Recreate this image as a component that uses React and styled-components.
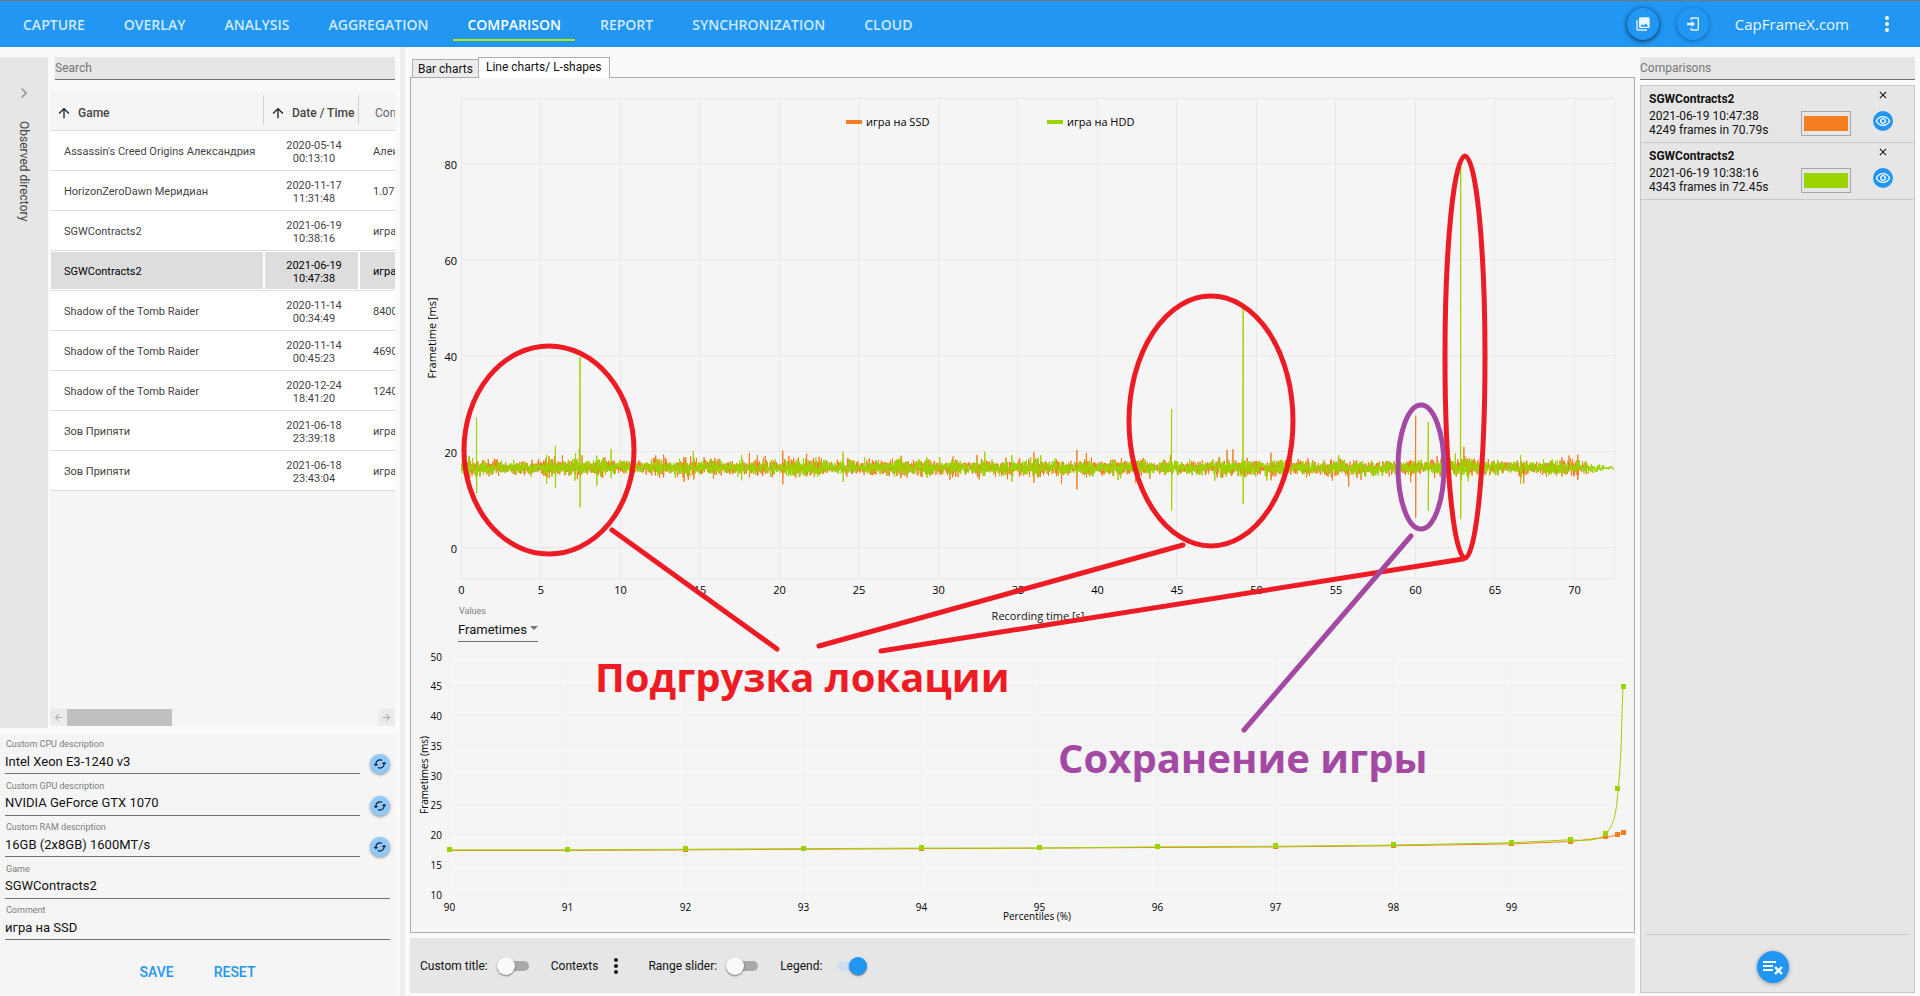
import React, { useState } from 'react';
import styled, { createGlobalStyle } from 'styled-components';
import {
  MdCached,
  MdPhotoLibrary,
  MdMoreVert,
  MdArrowUpward,
  MdArrowBack,
  MdArrowForward,
  MdChevronRight,
  MdClose,
  MdOutlineRemoveRedEye,
} from 'react-icons/md';

const ORANGE = '#f47e20';
const GREEN = '#9bd300';
const RED = '#ed1c24';
const PURPLE = '#a349a4';

const tabs = ['CAPTURE', 'OVERLAY', 'ANALYSIS', 'AGGREGATION', 'COMPARISON', 'REPORT', 'SYNCHRONIZATION', 'CLOUD'];

const records = [
  { game: "Assassin's Creed Origins Александрия", date: '2020-05-14', time: '00:13:10', comment: 'Александрия' },
  { game: 'HorizonZeroDawn Меридиан', date: '2020-11-17', time: '11:31:48', comment: '1.07 Меридиан' },
  { game: 'SGWContracts2', date: '2021-06-19', time: '10:38:16', comment: 'игра на HDD' },
  { game: 'SGWContracts2', date: '2021-06-19', time: '10:47:38', comment: 'игра на SSD' },
  { game: 'Shadow of the Tomb Raider', date: '2020-11-14', time: '00:34:49', comment: '8400' },
  { game: 'Shadow of the Tomb Raider', date: '2020-11-14', time: '00:45:23', comment: '4690' },
  { game: 'Shadow of the Tomb Raider', date: '2020-12-24', time: '18:41:20', comment: '1240' },
  { game: 'Зов Припяти', date: '2021-06-18', time: '23:39:18', comment: 'игра на SSD' },
  { game: 'Зов Припяти', date: '2021-06-18', time: '23:43:04', comment: 'игра на HDD' },
];

const fields = [
  { id: 'cpu', label: 'Custom CPU description', value: 'Intel Xeon E3-1240 v3', refresh: true },
  { id: 'gpu', label: 'Custom GPU description', value: 'NVIDIA GeForce GTX 1070', refresh: true },
  { id: 'ram', label: 'Custom RAM description', value: '16GB (2x8GB) 1600MT/s', refresh: true },
  { id: 'game', label: 'Game', value: 'SGWContracts2' },
  { id: 'comment', label: 'Comment', value: 'игра на SSD' },
];

const comparisons = [
  { id: 1, game: 'SGWContracts2', date: '2021-06-19 10:47:38', frames: '4249 frames in 70.79s', color: ORANGE },
  { id: 2, game: 'SGWContracts2', date: '2021-06-19 10:38:16', frames: '4343 frames in 72.45s', color: GREEN },
];

// [time, peak, dip] of the frames that stand out
const ssdSpikes = [
  [5.5, 19, 14.5], [12.7, 19.4, 14.6], [14.6, 18.8, 14.2], [18.1, 19.8, 14.6], [18.6, 19.3, 15],
  [20.2, 20.2, 13.2], [21.7, 19.6, 14.8], [30.9, 19, 15], [36, 19.9, 13.5], [38.7, 20.4, 12.1],
  [39.3, 19.8, 14.6], [50.9, 19.8, 14], [54.7, 18.4, 14.6], [60, 27.5, 6.2], [69.2, 18.8, 14.8], [70.2, 19.4, 14.1],
];
const hddSpikes = [
  [0.95, 27, 11.3], [5.35, 19.4, 13.3], [5.9, 21.2, 12.4], [7.45, 39.8, 8.4], [8.5, 19.2, 12.9],
  [9.4, 20.5, 14.5], [17.6, 19.3, 14], [24, 20, 13.7], [32.9, 20, 15], [34.6, 19.3, 13.7],
  [44.65, 28.9, 7.7], [49.15, 49.8, 9.1], [60.8, 26.2, 7.7], [62.5, 19.7, 15], [62.83, 79.5, 6], [66.6, 19.3, 13.3],
];

const percentiles = [90, 91, 92, 93, 94, 95, 96, 97, 98, 99, 99.5, 99.8, 99.9, 99.95];
const ssdPercentiles = [17.4, 17.4, 17.5, 17.6, 17.7, 17.8, 17.9, 18, 18.2, 18.5, 18.9, 19.6, 20, 20.4];
const hddPercentiles = [17.5, 17.5, 17.6, 17.7, 17.8, 17.8, 18, 18.1, 18.3, 18.7, 19.2, 20.2, 27.7, 44.8];

const frameX = (t) => 50.5 + t * 15.9;
const frameY = (ms) => 469.5 - ms * 4.79;
const shapeX = (p) => 38.5 + (p - 90) * 118;
const shapeY = (ms) => 251.5 - (ms - 10) * 5.95;

function range(from, to, step) {
  const list = [];
  for (let v = from; v <= to; v += step) list.push(v);
  return list;
}

function buildFrames(seed, duration, count, spread, spikes) {
  let s = seed;
  const random = () => {
    s = (s * 16807) % 2147483647;
    return s / 2147483647;
  };
  const queue = [...spikes];
  const points = [];
  for (let i = 0; i < count; i++) {
    const t = (i / count) * duration;
    if (queue.length && t >= queue[0][0]) {
      const [, peak, dip] = queue.shift();
      points.push([t, peak], [t, dip]);
      continue;
    }
    const swell = 0.85 + 0.12 * Math.sin(t * 0.9 + seed) + 0.12 * Math.sin(t * 3.7);
    const tail = t > 70 ? 1 - (t - 70) * 0.3 : 1;
    const noise = (random() + random() + random() - 1.5) * spread * swell * tail;
    const burst = random() > 0.98 ? 1.9 : 1;
    points.push([t, 16.65 + noise * burst]);
  }
  return points.map(([t, ms]) => `${frameX(t).toFixed(1)},${frameY(ms).toFixed(1)}`).join(' ');
}

const ssdLine = buildFrames(4249, 70.79, 4249, 1.9, ssdSpikes);
const hddLine = buildFrames(4343, 72.45, 4343, 1.7, hddSpikes);

function FrametimeChart() {
  return (
    <Chart viewBox="0 0 1223 522" role="img" aria-label="Frametime chart">
      <g stroke="#e8e8e8">
        {range(0, 70, 5).map((t) => (
          <line key={t} x1={Math.round(frameX(t)) - 0.5} x2={Math.round(frameX(t)) - 0.5} y1="20" y2="500" />
        ))}
        {range(0, 80, 20).map((ms) => (
          <line key={ms} x1="50" x2="1203" y1={Math.round(frameY(ms)) - 0.5} y2={Math.round(frameY(ms)) - 0.5} />
        ))}
        <rect x="50.5" y="20.5" width="1153" height="480" fill="none" />
      </g>
      <polyline points={ssdLine} fill="none" stroke={ORANGE} strokeLinejoin="bevel" />
      <polyline points={hddLine} fill="none" stroke={GREEN} strokeLinejoin="bevel" />
      {range(0, 80, 20).map((ms) => (
        <Tick key={ms} x="46" y={frameY(ms) + 5} textAnchor="end">{ms}</Tick>
      ))}
      {range(0, 70, 5).map((t) => (
        <Tick key={t} x={frameX(t)} y="516" textAnchor="middle">{t}</Tick>
      ))}
      <Tick transform="translate(25 260) rotate(-90)" textAnchor="middle">Frametime [ms]</Tick>
      <rect x="435" y="42" width="16" height="4" fill={ORANGE} />
      <Tick x="455" y="48">игра на SSD</Tick>
      <rect x="636" y="42" width="16" height="4" fill={GREEN} />
      <Tick x="656" y="48">игра на HDD</Tick>
    </Chart>
  );
}

function Shape({ values, color, path }) {
  return (
    <g fill={color}>
      <path d={path} fill="none" stroke={color} />
      {values.map((ms, i) => (
        <rect key={percentiles[i]} x={Math.round(shapeX(percentiles[i])) - 3} y={Math.round(shapeY(ms)) - 3} width="5" height="5" />
      ))}
    </g>
  );
}

function linePath(values, to) {
  return values
    .slice(0, to)
    .map((ms, i) => `${i ? 'L' : 'M'}${shapeX(percentiles[i])} ${shapeY(ms)}`)
    .join('');
}

function PercentileChart() {
  const ssdPath = linePath(ssdPercentiles, 14);
  const hddPath = `${linePath(hddPercentiles, 11)}C1172 198 1188 198 1195 191C1201 183 1205 178 1207 146C1211 110 1210 90 1212 44`;
  return (
    <Chart viewBox="0 0 1223 289" role="img" aria-label="Percentile chart">
      <g stroke="#f0f0f0">
        {range(90, 99, 1).map((p) => (
          <line key={p} x1={Math.round(shapeX(p)) - 0.5} x2={Math.round(shapeX(p)) - 0.5} y1="11" y2="253" />
        ))}
        {range(10, 50, 5).map((ms) => (
          <line key={ms} x1="36" x2="1216" y1={Math.round(shapeY(ms)) - 0.5} y2={Math.round(shapeY(ms)) - 0.5} />
        ))}
      </g>
      <Shape values={ssdPercentiles} color={ORANGE} path={ssdPath} />
      <Shape values={hddPercentiles} color={GREEN} path={hddPath} />
      {range(10, 50, 5).map((ms) => (
        <SmallTick key={ms} x="31" y={shapeY(ms) + 4} textAnchor="end">{ms}</SmallTick>
      ))}
      {range(90, 99, 1).map((p) => (
        <SmallTick key={p} x={shapeX(p)} y="268" textAnchor="middle">{p}</SmallTick>
      ))}
      <SmallTick x="626" y="277" textAnchor="middle">Percentiles (%)</SmallTick>
      <SmallTick transform="translate(17 132) rotate(-90)" textAnchor="middle">Frametimes (ms)</SmallTick>
    </Chart>
  );
}

function Annotations() {
  return (
    <Overlay viewBox="0 0 1223 854" preserveAspectRatio="xMidYMin meet">
      <g fill="none" stroke={RED} strokeWidth="5" strokeLinecap="round">
        <ellipse cx="138" cy="372" rx="85" ry="104" />
        <ellipse cx="800" cy="343" rx="82" ry="125" />
        <ellipse cx="1054" cy="279" rx="20" ry="201" />
        <path d="M201 452L366 571M408 568L772 467M470 573L1052 481" />
      </g>
      <g fill="none" stroke={PURPLE} strokeWidth="5" strokeLinecap="round">
        <ellipse cx="1010" cy="389" rx="23" ry="62" />
        <path d="M1000 458L833 652" />
      </g>
      <Note x="184" y="614" fill={RED}>Подгрузка локации</Note>
      <Note x="647" y="695" fill={PURPLE}>Сохранение игры</Note>
    </Overlay>
  );
}

function App() {
  const [selected, setSelected] = useState(3);
  const [options, setOptions] = useState({ title: false, slider: false, legend: true });

  const toggle = (name) => setOptions({ ...options, [name]: !options[name] });

  return (
    <Page>
      <GlobalStyle />
      <Header>
        <Nav>
          {tabs.map((tab) => (
            <NavLink href="#" key={tab} $active={tab === 'COMPARISON'}>{tab}</NavLink>
          ))}
        </Nav>
        <HeaderTools>
          <RoundButton $deep aria-label="Screenshots"><MdPhotoLibrary /></RoundButton>
          <RoundButton aria-label="Login">
            <svg viewBox="0 0 24 24" width="16" height="16" fill="currentColor">
              <path d="M10 17v-3H3v-4h7V7l5 5-5 5M10 2h9a2 2 0 0 1 2 2v16a2 2 0 0 1-2 2h-9a2 2 0 0 1-2-2v-2h2v2h9V4h-9v2H8V4a2 2 0 0 1 2-2z" />
            </svg>
          </RoundButton>
          <SiteLink href="#">CapFrameX.com</SiteLink>
          <IconButton aria-label="Menu"><MdMoreVert size={24} /></IconButton>
        </HeaderTools>
      </Header>

      <Body>
        <Left>
          <Browser>
            <Directory>
              <MdChevronRight size={20} />
              <span>Observed directory</span>
            </Directory>
            <Records>
              <Search placeholder="Search" aria-label="Search" />
              <TableWrap>
                <Table>
                  <colgroup>
                    <col width="214" />
                    <col width="95" />
                    <col width="200" />
                  </colgroup>
                  <thead>
                    <tr>
                      <th><HeadCell><MdArrowUpward size={16} />Game</HeadCell></th>
                      <th><HeadCell><MdArrowUpward size={16} />Date / Time</HeadCell></th>
                      <th><HeadCell $plain>Comment</HeadCell></th>
                    </tr>
                  </thead>
                  <tbody>
                    {records.map((record, index) => (
                      <Row key={record.date + record.time} $selected={index === selected} onClick={() => setSelected(index)}>
                        <td>{record.game}</td>
                        <td>{record.date}<br />{record.time}</td>
                        <td>{record.comment}</td>
                      </Row>
                    ))}
                  </tbody>
                </Table>
                <ScrollBar>
                  <button aria-label="Scroll left"><MdArrowBack size={11} /></button>
                  <Thumb />
                  <button aria-label="Scroll right"><MdArrowForward size={11} /></button>
                </ScrollBar>
              </TableWrap>
            </Records>
          </Browser>
          <Form onSubmit={(e) => e.preventDefault()}>
            <Fields>
              {fields.map((field) => (
                <Field key={field.id}>
                  <div>
                    <label htmlFor={field.id}>{field.label}</label>
                    <input id={field.id} defaultValue={field.value} />
                  </div>
                  {field.refresh && (
                    <Refresh type="button" aria-label={`Reload ${field.id}`}><MdCached size={14} /></Refresh>
                  )}
                </Field>
              ))}
            </Fields>
            <Actions>
              <FlatButton>SAVE</FlatButton>
              <FlatButton type="reset">RESET</FlatButton>
            </Actions>
          </Form>
        </Left>

        <Splitter />

        <Main>
          <TabList role="tablist">
            <Tab role="tab">Bar charts</Tab>
            <Tab role="tab" $active>Line charts/ L-shapes</Tab>
          </TabList>
          <Panel>
            <FrametimeChart />
            <AxisRow>
              <ValueSelect>
                <label htmlFor="values">Values</label>
                <select id="values" defaultValue="Frametimes">
                  <option>Frametimes</option>
                  <option>FPS</option>
                </select>
              </ValueSelect>
              <AxisTitle>Recording time [s]</AxisTitle>
            </AxisRow>
            <PercentileChart />
            <Annotations />
          </Panel>
          <Toolbar>
            <Switch>
              Custom title:
              <input type="checkbox" checked={options.title} onChange={() => toggle('title')} />
            </Switch>
            <Contexts>
              Contexts
              <IconButton aria-label="Contexts"><MdMoreVert size={24} /></IconButton>
            </Contexts>
            <Switch>
              Range slider:
              <input type="checkbox" checked={options.slider} onChange={() => toggle('slider')} />
            </Switch>
            <Switch $wide>
              Legend:
              <input type="checkbox" checked={options.legend} onChange={() => toggle('legend')} />
            </Switch>
          </Toolbar>
        </Main>

        <Right>
          <Search placeholder="Comparisons" aria-label="Comparisons" />
          <ComparisonList>
            {comparisons.map((item) => (
              <Comparison key={item.id}>
                <div>
                  <h4>{item.game}</h4>
                  <p>{item.date}</p>
                  <p>{item.frames}</p>
                </div>
                <Swatch $color={item.color} aria-label="Color" />
                <ItemTools>
                  <IconButton aria-label="Remove"><MdClose size={12} /></IconButton>
                  <Eye aria-label="Hide"><MdOutlineRemoveRedEye size={16} /></Eye>
                </ItemTools>
              </Comparison>
            ))}
            <ListFooter>
              <RoundButton aria-label="Remove all">
                <svg viewBox="0 0 32 32" width="32" height="32" fill="none" stroke="#fff" strokeWidth="2">
                  <path d="M6 11h13M6 15h10M6 19h10" />
                  <path d="M18 16l7 7M25 16l-7 7" strokeWidth="2.4" />
                </svg>
              </RoundButton>
            </ListFooter>
          </ComparisonList>
        </Right>
      </Body>
    </Page>
  );
}

const GlobalStyle = createGlobalStyle`
  * {
    box-sizing: border-box;
  }
  body {
    margin: 0;
    background: #fafafa;
    color: #111;
    font-family: Roboto, 'Open Sans', sans-serif;
    font-size: 12px;
  }
  button, input, select {
    font: inherit;
    color: inherit;
    border: 0;
    padding: 0;
    background: none;
    outline: none;
  }
  button {
    cursor: pointer;
  }
  a {
    text-decoration: none;
  }
  h4, p {
    margin: 0;
  }
  svg {
    display: block;
  }
`

const Page = styled.div`
  min-height: 100vh;
  display: flex;
  flex-direction: column;
`

const Header = styled.header`
  height: 47px;
  display: flex;
  align-items: center;
  justify-content: space-between;
  background: #2196f3;
  border-top: 1px solid #757575;
  font-family: 'Open Sans', sans-serif;
`

const Nav = styled.nav`
  display: flex;
  gap: 11px;
  padding-left: 9px;
`

const NavLink = styled.a`
  padding: 2px 14px 0;
  line-height: 29px;
  font-size: 14px;
  font-weight: 600;
  color: ${(props) => (props.$active ? '#fff' : '#d3eafd')};
  border-bottom: 2px solid ${(props) => (props.$active ? '#aeea00' : 'transparent')};
`

const HeaderTools = styled.div`
  display: flex;
  align-items: center;
  gap: 18px;
  padding-right: 21px;
  color: #fff;
`

const RoundButton = styled.button`
  width: 32px;
  height: 32px;
  display: grid;
  place-items: center;
  border-radius: 50%;
  background: #2196f3;
  color: #e9f4fe;
  font-size: 16px;
  box-shadow: ${(props) => (props.$deep ? '0 1px 5px rgba(0, 0, 0, 0.75)' : '0 1px 4px rgba(0, 0, 0, 0.35)')};
`

const SiteLink = styled.a`
  margin: 0 8px;
  font-size: 15px;
  color: #eef7fe;
`

const IconButton = styled.button`
  display: grid;
  place-items: center;
`

const Body = styled.div`
  flex: 1;
  display: flex;
`

const Left = styled.div`
  width: 395px;
  display: flex;
  flex-direction: column;
  gap: 5px;
  padding-top: 10px;
`

const Browser = styled.div`
  flex: 1;
  display: flex;
  gap: 2px;
`

const Directory = styled.button`
  width: 48px;
  display: flex;
  flex-direction: column;
  align-items: center;
  gap: 18px;
  padding-top: 26px;
  background: #e6e6e6;
  color: #999;
  span {
    writing-mode: vertical-rl;
    color: #444;
  }
`

const Records = styled.div`
  flex: 1;
  min-width: 0;
  display: flex;
  flex-direction: column;
  gap: 10px;
  padding-bottom: 2px;
  > input {
    margin-left: 5px;
  }
`

const Search = styled.input`
  height: 23px;
  background: #e6e6e6;
  border-bottom: 1px solid #707070;
  &::placeholder {
    color: #757575;
    opacity: 1;
  }
`

const TableWrap = styled.div`
  flex: 1;
  display: flex;
  flex-direction: column;
  justify-content: space-between;
  overflow: hidden;
  background: #f5f5f5;
`

const Table = styled.table`
  width: 509px;
  table-layout: fixed;
  border-spacing: 0;
  th {
    padding: 0;
    height: 41px;
    border-bottom: 1px solid #ddd;
  }
`

const HeadCell = styled.div`
  height: 30px;
  display: flex;
  align-items: center;
  gap: 6px;
  padding-top: 5px;
  padding-left: ${(props) => (props.$plain ? 16 : 6)}px;
  border-right: 1px solid #d0d0d0;
  font-weight: ${(props) => (props.$plain ? 400 : 500)};
  color: ${(props) => (props.$plain ? '#666' : '#444')};
  white-space: nowrap;
  svg {
    color: #222;
  }
`

const Row = styled.tr`
  background: #fff;
  color: ${(props) => (props.$selected ? '#000' : '#444')};
  font-size: 11px;
  line-height: 13px;
  td {
    height: 40px;
    padding: 2px 0 0 14px;
    border-bottom: 1px solid #ddd;
    white-space: nowrap;
    background: ${(props) => (props.$selected ? '#ddd' : 'none')};
    box-shadow: ${(props) => (props.$selected ? 'inset 0 0 0 1px #fff' : 'none')};
  }
  td:nth-child(2) {
    padding: 2px 0 0 5px;
    text-align: center;
  }
`

const ScrollBar = styled.div`
  height: 17px;
  display: flex;
  button {
    width: 17px;
    display: grid;
    place-items: center;
    background: #ebebeb;
    color: #aaa;
  }
  button:last-child {
    margin-left: auto;
  }
`

const Thumb = styled.div`
  width: 105px;
  background: #c0c0c0;
`

const Form = styled.form`
  background: #f5f5f5;
  padding: 0 5px;
`

const Fields = styled.div`
  height: 207px;
  display: grid;
  grid-auto-rows: 1fr;
`

const Field = styled.div`
  display: flex;
  align-items: flex-end;
  gap: 10px;
  div {
    flex: 1;
    display: flex;
    flex-direction: column;
    border-bottom: 1px solid #707070;
  }
  label {
    padding-left: 1px;
    font-size: 9px;
    line-height: 12px;
    color: #7c7c7c;
  }
  input {
    height: 23px;
    padding-bottom: 1px;
    font-size: 13px;
  }
`

const Refresh = styled.button`
  width: 20px;
  height: 20px;
  display: grid;
  place-items: center;
  border-radius: 50%;
  background: #90caf9;
  color: #12202c;
  box-shadow: 0 1px 3px rgba(0, 0, 0, 0.4);
`

const Actions = styled.div`
  height: 56px;
  display: flex;
  justify-content: center;
  gap: 8px;
  padding-top: 16px;
`

const FlatButton = styled.button`
  height: 32px;
  padding: 0 16px;
  font-size: 14px;
  font-weight: 500;
  color: #2196f3;
`

const Splitter = styled.div`
  width: 5px;
  margin: 0 5px;
  background: #eee;
`

const Main = styled.main`
  flex: 1;
  min-width: 0;
  display: flex;
  flex-direction: column;
  padding: 10px 0 3px;
`

const TabList = styled.div`
  height: 20px;
  display: flex;
  align-items: flex-end;
  padding-left: 2px;
`

const Tab = styled.button`
  z-index: 1;
  height: ${(props) => (props.$active ? 21 : 18)}px;
  margin-bottom: ${(props) => (props.$active ? -1 : 0)}px;
  padding: ${(props) => (props.$active ? '0 7px 2px' : '0 5px')};
  border: 1px solid #acacac;
  border-bottom: 0;
  border-right-width: ${(props) => (props.$active ? 1 : 0)}px;
  background: ${(props) => (props.$active ? '#fff' : '#ececec')};
`

const Panel = styled.section`
  position: relative;
  background: #f5f5f5;
  border: 1px solid #acacac;
`

const Chart = styled.svg`
  width: 100%;
  height: auto;
`

const Tick = styled.text`
  font-family: 'Open Sans', sans-serif;
  font-size: 11px;
  fill: #000;
`

const SmallTick = styled(Tick)`
  font-size: 10px;
`

const Overlay = styled.svg`
  position: absolute;
  inset: 0;
  width: 100%;
  height: 100%;
  pointer-events: none;
`

const Note = styled.text`
  font-family: 'Open Sans', sans-serif;
  font-size: 40px;
  font-weight: 700;
`

const AxisRow = styled.div`
  height: 43px;
  display: grid;
  grid-template-columns: 1fr auto 1fr;
  padding: 0 16px 0 47px;
`

const ValueSelect = styled.div`
  position: relative;
  width: 80px;
  height: 42px;
  display: flex;
  flex-direction: column;
  padding-top: 5px;
  border-bottom: 1px solid #707070;
  label {
    padding-left: 1px;
    font-size: 9px;
    line-height: 12px;
    color: #7c7c7c;
  }
  select {
    flex: 1;
    appearance: none;
    font-size: 13px;
  }
  &::after {
    content: '';
    position: absolute;
    right: 0;
    bottom: 11px;
    border: 4px solid transparent;
    border-top-color: #757575;
    border-bottom: 0;
    pointer-events: none;
  }
`

const AxisTitle = styled.span`
  padding-top: 8px;
  font-family: 'Open Sans', sans-serif;
  font-size: 11px;
`

const Toolbar = styled.div`
  height: 55px;
  display: flex;
  align-items: center;
  gap: 22px;
  margin-top: 5px;
  padding-left: 10px;
  background: #e6e6e6;
`

const Switch = styled.label`
  display: flex;
  align-items: center;
  gap: ${(props) => (props.$wide ? 13 : 9)}px;
  input {
    appearance: none;
    position: relative;
    width: 32px;
    height: 18px;
    margin: 0;
  }
  input::before {
    content: '';
    position: absolute;
    inset: 4px 0 4px 2px;
    border-radius: 6px;
    background: #a8a8a8;
  }
  input::after {
    content: '';
    position: absolute;
    left: 0;
    width: 18px;
    height: 18px;
    border-radius: 50%;
    background: #fafafa;
    box-shadow: 0 1px 2px rgba(0, 0, 0, 0.5);
  }
  input:checked::before {
    background: #cfdfee;
  }
  input:checked::after {
    left: 14px;
    background: #2196f3;
  }
`

const Contexts = styled.div`
  display: flex;
  align-items: center;
  gap: 6px;
  button {
    width: 22px;
  }
`

const Right = styled.aside`
  width: 275px;
  display: flex;
  flex-direction: column;
  gap: 5px;
  margin: 10px 5px 3px;
`

const ComparisonList = styled.div`
  flex: 1;
  display: flex;
  flex-direction: column;
  background: #e6e6e6;
  border: 1px solid #c8c8c8;
`

const Comparison = styled.article`
  height: 57px;
  display: flex;
  padding: 3px 21px 0 8px;
  border-bottom: 1px solid #c8c8c8;
  > div:first-child {
    flex: 1;
  }
  h4 {
    padding: 2px 0;
    line-height: 16px;
    font-size: 12px;
  }
  p {
    line-height: 14px;
  }
`

const Swatch = styled.button`
  width: 50px;
  height: 25px;
  margin-top: 22px;
  padding: 4px 2px;
  border: 1px solid #a6a6ab;
  background: ${(props) => props.$color} content-box;
`

const ItemTools = styled.div`
  display: flex;
  flex-direction: column;
  align-items: center;
  gap: 10px;
  margin-left: 22px;
`

const Eye = styled.button`
  width: 20px;
  height: 20px;
  display: grid;
  place-items: center;
  border-radius: 50%;
  background: #2196f3;
  color: #fff;
`

const ListFooter = styled.footer`
  height: 58px;
  display: grid;
  justify-content: center;
  padding: 16px 10px 0 0;
  margin: auto 5px 0;
  border-top: 1px solid #c8c8c8;
`

export default App;
